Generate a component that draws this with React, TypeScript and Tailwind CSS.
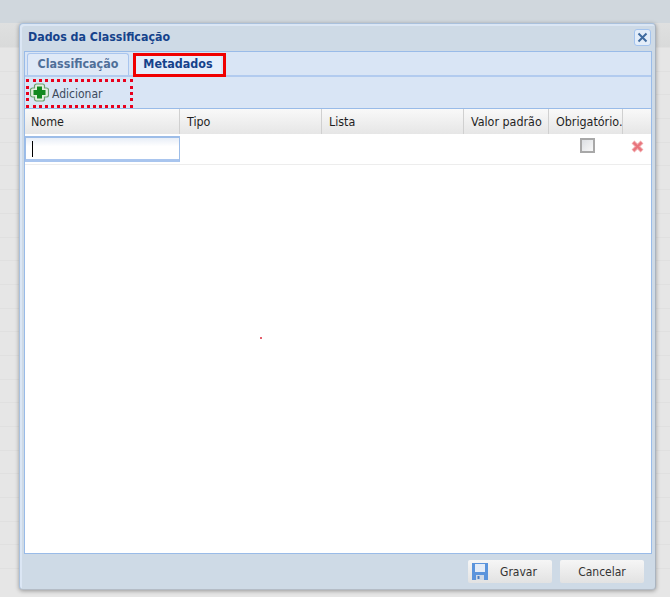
import React from "react";

const rows = Array.from({ length: 23 });

const columns = [
  { label: "Nome", width: "w-[155px]", pad: "pl-[6px]" },
  { label: "Tipo", width: "w-[142px]", pad: "pl-[7px]" },
  { label: "Lista", width: "w-[142px]", pad: "pl-[7px]" },
  { label: "Valor padrão", width: "w-[85px]", pad: "pl-[7px]" },
  { label: "Obrigatório.", width: "w-[74px]", pad: "pl-[7px]" },
];

const App: React.FC = () => {
  return (
    <div className="relative h-[597px] w-[670px] overflow-hidden bg-[#e6e6e6] font-['DejaVu_Sans_Condensed','DejaVu_Sans',sans-serif] text-[12.4px]">
      {/* page behind the dimmed overlay */}
      <div className="h-[23px] bg-[#d0d7dd]" />
      <div className="h-[24px] bg-gradient-to-b from-[#dfe0e0] to-[#d9dada]" />
      <div className="flex flex-col">
        {rows.map((_, i) => (
          <div key={i} className="h-[23.7px] border-t border-[#e0e0e0]" />
        ))}
      </div>

      {/* dialog */}
      <div className="absolute left-[19px] top-[23px] flex h-[567px] w-[637px] flex-col rounded-[4px] border border-[#a9c0dc] border-b-[#b4bcc6] border-r-[#aab4c0] bg-[#cedae6] shadow-[0_1px_4px_rgba(0,0,0,0.35),inset_2px_2px_0_#dbe6f4]">
        <div className="flex h-[27px] shrink-0 items-center justify-between pl-[8px] pr-[4px]">
          <span className="text-[12.3px] font-bold text-[#15428b]">Dados da Classificação</span>
          <button className="flex h-[17px] w-[17px] items-center justify-center rounded-[3px] border border-[#a3c3ee] bg-[#e3edf9]">
            <svg width="11" height="11" viewBox="0 0 11 11">
              <path d="M1.5 1.5 9.5 9.5M9.5 1.5 1.5 9.5" stroke="#3f6a9f" strokeWidth="2" />
            </svg>
          </button>
        </div>

        <div className="ml-[4px] mr-[3px] flex min-h-0 flex-1 flex-col border border-[#99bbe8]">
          {/* tabs */}
          <div className="flex h-[25px] shrink-0 items-end gap-[6px] border-b-2 border-[#b2cbef] bg-[#d9e5f5] pl-[2px]">
            <div className="flex h-[22px] w-[102px] items-center justify-center rounded-t-[3px] border border-b-0 border-[#a9c5ee] bg-[#dfe9f7] text-[12.4px] font-bold text-[#4f6f99]">
              Classificação
            </div>
            <div className="relative flex h-[22px] w-[86px] items-center justify-center bg-[#e4eefb] text-[12.4px] font-bold text-[#15428b]">
              Metadados
              {/* red highlight drawn over the tab */}
              <div className="pointer-events-none absolute -bottom-[2px] -left-[2px] -right-[5px] top-0 border-[3px] border-[#f00000]" />
            </div>
          </div>

          {/* toolbar */}
          <div className="relative flex h-[31px] shrink-0 items-center bg-[#d9e5f5] pl-[5px]">
            <svg width="19" height="19" viewBox="0 0 19 19" className="shrink-0">
              <path
                d="M6.500 1h6a2 2 0 0 1 2 2v2h2a2 2 0 0 1 2 2v5a2 2 0 0 1-2 2h-2v2a2 2 0 0 1-2 2h-6a2 2 0 0 1-2-2v-2h-2a2 2 0 0 1-2-2V7a2 2 0 0 1 2-2h2V3a2 2 0 0 1 2-2z"
                fill="#e3efdf"
                stroke="#6ba070"
                strokeWidth="1.200"
              />
              <path d="M7 3.500h5V7h3.500v5H12v3.500H7V12H3.500V7H7z" fill="#12891f" />
            </svg>
            <span className="ml-[3px] pt-[2px] text-[12px] text-[#3c4a5c]">Adicionar</span>
            <div className="pointer-events-none absolute bottom-0 left-[1px] top-[2px] w-[107px] border-[3px] border-dotted border-[#e8001c]" />
          </div>

          {/* grid */}
          <div className="flex min-h-0 flex-1 flex-col border-t border-[#99bbe8] bg-white">
            <div className="flex h-[25px] shrink-0 bg-gradient-to-b from-[#f9f9f9] to-[#e6e6e6] text-[#1f1f1f]">
              {columns.map((c) => (
                <div key={c.label} className={`${c.width} ${c.pad} flex items-center border-r border-[#d0d0d0] pt-[2px]`}>
                  <span className="whitespace-nowrap">{c.label}</span>
                </div>
              ))}
            </div>
            <div className="flex h-[31px] shrink-0 border-b border-[#ededed]">
              <div className="w-[155px] pt-[2px]">
                <div className="flex h-[26px] items-center border-x border-b-[3px] border-t-2 border-x-[#9dbde8] border-b-[#a9c5ee] border-t-[#9dbde8] bg-gradient-to-b from-[#e8eef7] to-white to-40% pl-[6px]">
                  <div className="h-[16px] w-px bg-black" />
                </div>
              </div>
              <div className="w-[369px]" />
              <div className="flex w-[74px] justify-center pt-[4px]">
                <div className="ml-[3px] h-[15px] w-[15px] border-2 border-[#a8a8a8] bg-gradient-to-br from-[#dcdfe3] to-[#f8f8f8]" />
              </div>
              <div className="flex flex-1 justify-center pt-[6px]">
                <svg width="13" height="13" viewBox="0 0 13 13">
                  <path d="M2 2 11 11M11 2 2 11" stroke="#f0a5a8" strokeWidth="4" />
                  <path d="M2.500 2.500 10.500 10.500M10.500 2.500 2.500 10.500" stroke="#e8737b" strokeWidth="2" />
                </svg>
              </div>
            </div>
            <div className="relative flex-1">
              <div className="absolute left-[235px] top-[172px] h-[2px] w-[2px] bg-[#e4606d]" />
            </div>
          </div>
        </div>

        {/* footer */}
        <div className="flex h-[35px] shrink-0 items-center justify-end gap-[8px] pr-[11px]">
          <button className="flex h-[23px] w-[84px] items-center rounded-[2px] bg-gradient-to-b from-[#f6f6f6] to-[#e2e2e2] pl-[4px] text-[12px] text-[#333]">
            <svg width="16" height="17" viewBox="0 0 16 17" className="shrink-0">
              <path d="M0 0h16v17H0z" fill="#5b94dc" />
              <path d="M3 1h10v8H3z" fill="#e4ecf7" />
              <path d="M4 12h8v5H4z" fill="#cfd9e6" />
              <path d="M5.500 13h2v3h-2z" fill="#4a7cc0" />
            </svg>
            <span className="flex-1 pr-[3px] text-center">Gravar</span>
          </button>
          <button className="h-[23px] w-[84px] rounded-[2px] bg-gradient-to-b from-[#f6f6f6] to-[#e2e2e2] text-[12px] text-[#333]">
            Cancelar
          </button>
        </div>
      </div>
    </div>
  );
};

export default App;
